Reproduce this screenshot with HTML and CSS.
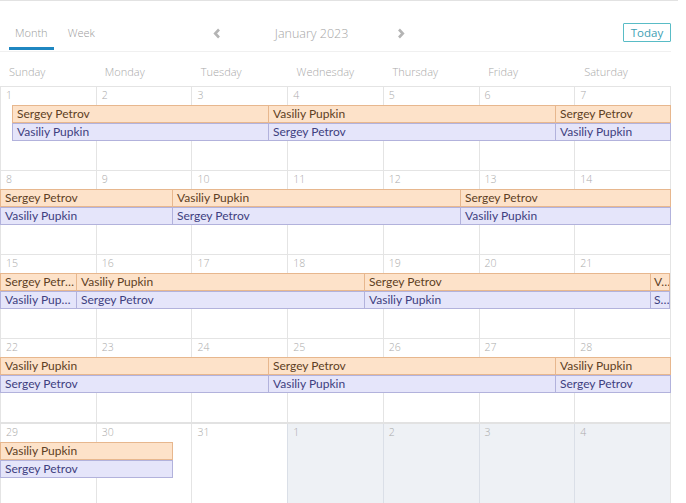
FILE: index.html
```html
<!DOCTYPE html>
<html>
<head>
<meta charset="utf-8">
<link rel="stylesheet" href="styles.css">
</head>
<body>
<div class="app">
  <header class="toolbar">
    <nav class="tabs">
      <span class="tab active">Month</span>
      <span class="tab">Week</span>
    </nav>
    <div class="pager">
      <span class="arrow"><svg width="8" height="11" viewBox="0 0 8 11"><polyline points="6,1.5 2.2,5.5 6,9.5" fill="none" stroke="#b4b4b4" stroke-width="2.6"/></svg></span>
      <span class="title">January 2023</span>
      <span class="arrow"><svg width="8" height="11" viewBox="0 0 8 11"><polyline points="2,1.5 5.8,5.5 2,9.5" fill="none" stroke="#b4b4b4" stroke-width="2.6"/></svg></span>
    </div>
    <button class="today">Today</button>
  </header>

  <div class="dow">
    <span>Sunday</span><span>Monday</span><span>Tuesday</span><span>Wednesday</span><span>Thursday</span><span>Friday</span><span>Saturday</span>
  </div>

  <div class="month">
    <div class="week">
      <div class="cells">
        <div class="cell">1</div><div class="cell">2</div><div class="cell">3</div><div class="cell">4</div><div class="cell">5</div><div class="cell">6</div><div class="cell">7</div>
      </div>
      <div class="lanes">
        <div class="lane"><div class="ev orange" style="margin-left:12px;width:257px">Sergey Petrov</div><div class="ev orange" style="width:288px">Vasiliy Pupkin</div><div class="ev orange" style="width:116px">Sergey Petrov</div></div>
        <div class="lane"><div class="ev purple" style="margin-left:12px;width:257px">Vasiliy Pupkin</div><div class="ev purple" style="width:288px">Sergey Petrov</div><div class="ev purple" style="width:116px">Vasiliy Pupkin</div></div>
      </div>
    </div>

    <div class="week">
      <div class="cells">
        <div class="cell">8</div><div class="cell">9</div><div class="cell">10</div><div class="cell">11</div><div class="cell">12</div><div class="cell">13</div><div class="cell">14</div>
      </div>
      <div class="lanes">
        <div class="lane"><div class="ev orange" style="width:173px">Sergey Petrov</div><div class="ev orange" style="width:289px">Vasiliy Pupkin</div><div class="ev orange" style="width:211px">Sergey Petrov</div></div>
        <div class="lane"><div class="ev purple" style="width:173px">Vasiliy Pupkin</div><div class="ev purple" style="width:289px">Sergey Petrov</div><div class="ev purple" style="width:211px">Vasiliy Pupkin</div></div>
      </div>
    </div>

    <div class="week">
      <div class="cells">
        <div class="cell">15</div><div class="cell">16</div><div class="cell">17</div><div class="cell">18</div><div class="cell">19</div><div class="cell">20</div><div class="cell">21</div>
      </div>
      <div class="lanes">
        <div class="lane"><div class="ev orange" style="width:77px">Sergey Petrov</div><div class="ev orange" style="width:289px">Vasiliy Pupkin</div><div class="ev orange" style="width:287px">Sergey Petrov</div><div class="ev orange tiny" style="width:20px">V…</div></div>
        <div class="lane"><div class="ev purple" style="width:77px">Vasiliy Pupkin</div><div class="ev purple" style="width:289px">Sergey Petrov</div><div class="ev purple" style="width:287px">Vasiliy Pupkin</div><div class="ev purple tiny" style="width:20px">S…</div></div>
      </div>
    </div>

    <div class="week">
      <div class="cells">
        <div class="cell">22</div><div class="cell">23</div><div class="cell">24</div><div class="cell">25</div><div class="cell">26</div><div class="cell">27</div><div class="cell">28</div>
      </div>
      <div class="lanes">
        <div class="lane"><div class="ev orange" style="width:269px">Vasiliy Pupkin</div><div class="ev orange" style="width:288px">Sergey Petrov</div><div class="ev orange" style="width:116px">Vasiliy Pupkin</div></div>
        <div class="lane"><div class="ev purple" style="width:269px">Sergey Petrov</div><div class="ev purple" style="width:288px">Vasiliy Pupkin</div><div class="ev purple" style="width:116px">Sergey Petrov</div></div>
      </div>
    </div>

    <div class="week last">
      <div class="cells">
        <div class="cell">29</div><div class="cell">30</div><div class="cell">31</div><div class="cell other">1</div><div class="cell other">2</div><div class="cell other">3</div><div class="cell other">4</div>
      </div>
      <div class="lanes">
        <div class="lane"><div class="ev orange" style="width:173px">Vasiliy Pupkin</div></div>
        <div class="lane"><div class="ev purple" style="width:173px">Sergey Petrov</div></div>
      </div>
    </div>
  </div>
</div>
</body>
</html>
```
FILE: styles.css
```css
* { box-sizing: border-box; }
html, body { margin: 0; padding: 0; background: #fff; }
body { font-family: "Open Sans", "Liberation Sans", sans-serif; overflow: hidden; height: 503px; }

.app {
  width: 678px;
  border-top: 1px solid #e2e2e2;
}

.toolbar {
  width: 671px;
  height: 51px;
  padding: 16px 0 0 9px;
  display: flex;
  align-items: center;
  border-bottom: 1px solid #f0f0f0;
}

.tabs { display: flex; align-self: flex-end; height: 33px; margin-bottom: 1px; }
.tab {
  display: flex;
  align-items: center;
  padding: 0 6px;
  margin-right: 8px;
  font-size: 11px;
  color: #9b9b9b;
  border-bottom: 3px solid transparent;
  font-weight: 300;
}
.tab.active { border-bottom-color: #1f87c1; }

.pager { display: flex; align-items: center; margin-left: 104px; margin-top: -2px; }
.arrow { display: flex; width: 8px; height: 11px; }
.title {
  margin: 0 49px 0 54px;
  font-size: 12.5px;
  color: #a6a6a6;
  font-weight: 300;
}

.today {
  margin-left: auto;
  width: 48px;
  height: 19px;
  padding: 0;
  background: #fff;
  border: 1px solid #59bcc6;
  border-radius: 1px;
  color: #3e9fb4;
  font-family: "Open Sans", "Liberation Sans", sans-serif;
  font-size: 11.5px;
  line-height: 16px;
  margin-top: -3px;
}

.dow {
  width: 671px;
  height: 34px;
  display: grid;
  grid-template-columns: repeat(7, 1fr);
  padding-top: 12px;
}
.dow span {
  padding-left: 9px;
  font-size: 11px;
  line-height: 16px;
  color: #a9a9a9;
  font-weight: 300;
}

.month { width: 671px; }

.week {
  display: grid;
  height: 84px;
  border-top: 1px solid #e4e4e4;
}
.week.last { border-top: 2px solid #e2e2e2; height: 90px; }

.cells, .lanes { grid-area: 1 / 1; }

.cells {
  display: grid;
  grid-template-columns: repeat(7, 1fr);
  border-right: 1px solid #e4e4e4;
}
.cell {
  border-left: 1px solid #e4e4e4;
  padding: 1px 0 0 5px;
  font-size: 10.5px;
  line-height: 14px;
  color: #acacac;
  font-weight: 300;
}
.cell.other { background: #eef1f5; border-left-color: #dadfe7; }

.lanes { padding-top: 18px; display: flex; flex-direction: column; overflow: hidden; }
.lane { display: flex; height: 18px; overflow: hidden; }

.ev {
  flex: none;
  height: 18px;
  margin-right: -1px;
  padding: 0 0 0 4px;
  border: 1px solid;
  font-family: "Lato", "Liberation Sans", sans-serif;
  font-size: 12px;
  line-height: 16px;
  white-space: nowrap;
  overflow: hidden;
  text-overflow: ellipsis;
}
.ev.tiny { padding-left: 3px; padding-right: 0; text-overflow: clip; }
.orange { background: #fde2c9; border-color: #e7b78e; color: #5e4024; }
.purple { background: #e5e5fa; border-color: #b2b2dc; color: #40407f; }
```
